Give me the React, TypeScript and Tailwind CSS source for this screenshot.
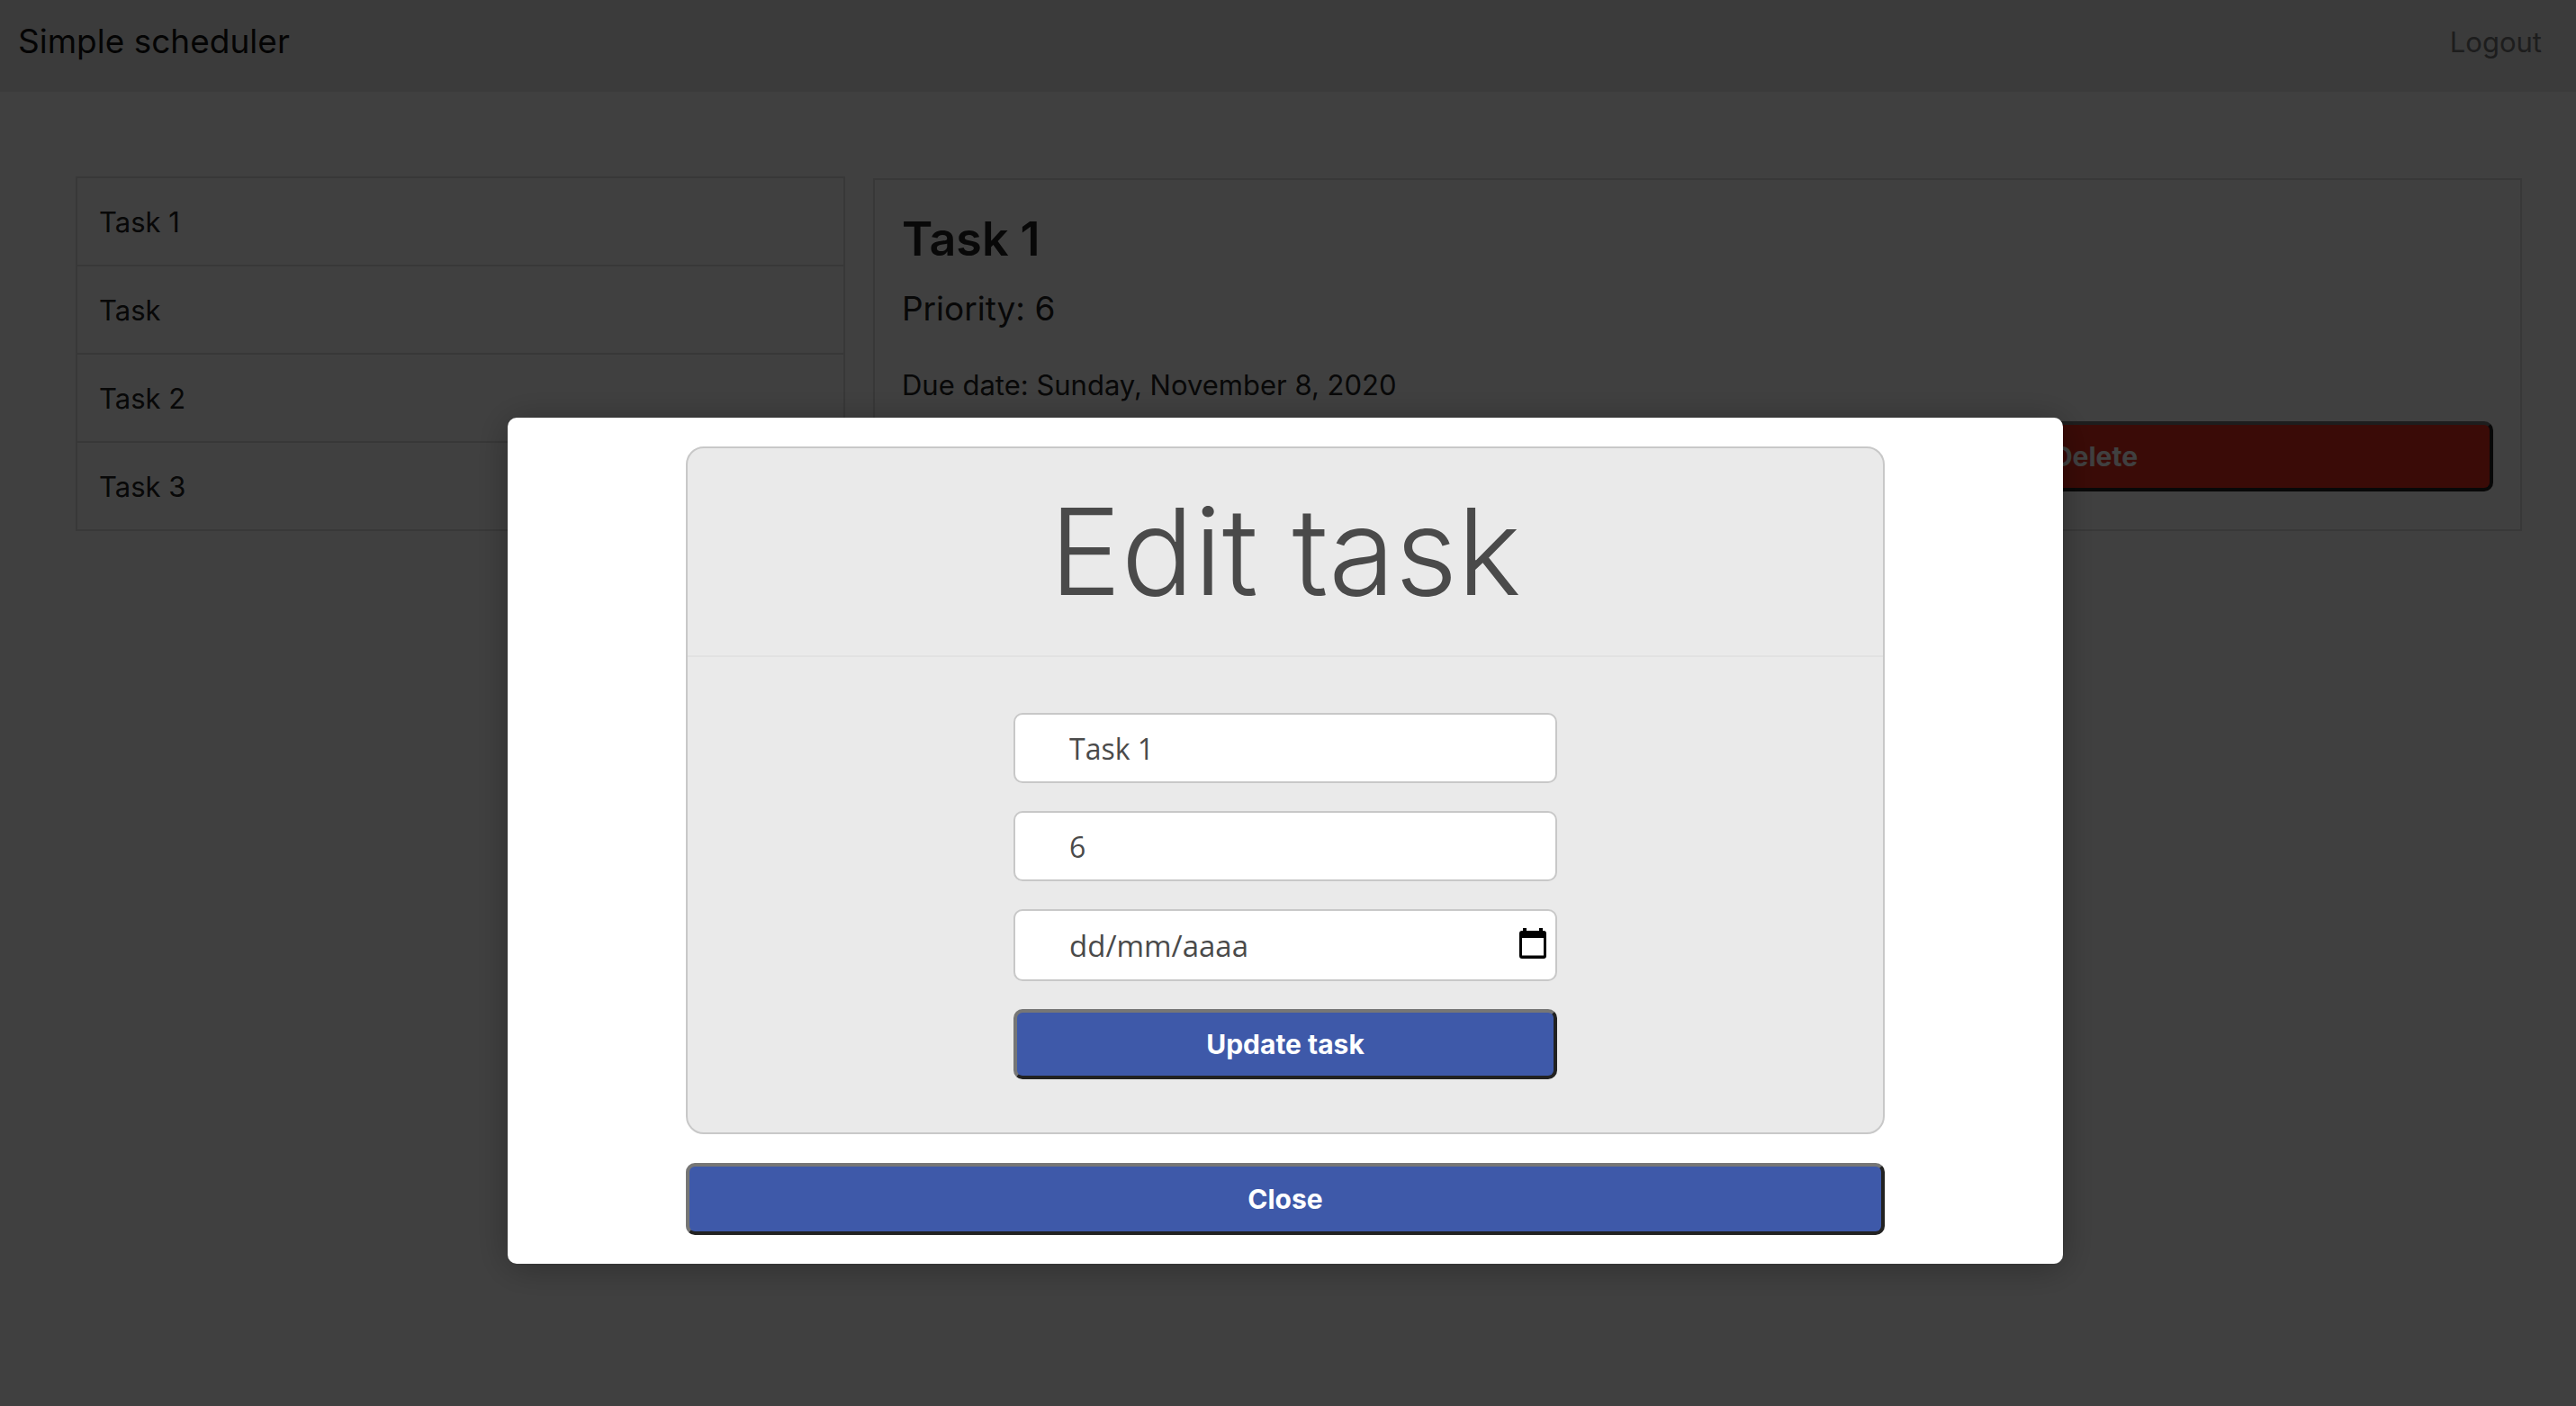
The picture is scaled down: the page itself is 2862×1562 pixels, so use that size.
import { useState } from "react";

const tasks = ["Task 1", "Task", "Task 2", "Task 3"];

const bevel =
  "rounded-[10px] border-4 border-t-[#767676] border-l-[#767676] border-r-[#222222] border-b-[#222222] text-[30px] leading-9 font-bold text-white";

const field =
  "w-full rounded-[10px] border-2 border-[#c8c8c8] bg-white pl-[60px] font-['Open_Sans',sans-serif] leading-[44px] text-[#4a4a4a] placeholder:text-[#4a4a4a] placeholder:opacity-100 outline-none";

function CalendarIcon() {
  return (
    <svg viewBox="0 0 30 34" className="h-[34px] w-[30px]" aria-hidden="true">
      <path
        fill="#000"
        fillRule="evenodd"
        d="M4 0h4v3h14V0h4v3h1a3 3 0 0 1 3 3v25a3 3 0 0 1-3 3H3a3 3 0 0 1-3-3V6a3 3 0 0 1 3-3h1zM3 11v19.500h24V11z"
      />
    </svg>
  );
}

function Header() {
  return (
    <header className="flex h-[102px] items-start justify-between bg-[#ececec] pt-5 pr-[38px] pl-5">
      <h1 className="text-[37px] leading-[52px] text-[#111111]">Simple scheduler</h1>
      <a href="#logout" className="text-[31px] leading-[54px] text-[#757575]">
        Logout
      </a>
    </header>
  );
}

function TaskList() {
  return (
    <ul className="border-2 border-[#dfdfdf]">
      {tasks.map((task) => (
        <li key={task} className="flex h-[98px] items-center border-b-2 border-[#dfdfdf] px-6 pt-0.5 text-[31px] text-[#222222] last:h-24 last:border-b-0">
          {task}
        </li>
      ))}
    </ul>
  );
}

function TaskDetail() {
  return (
    <section className="mt-0.5 border-2 border-[#dfdfdf] px-[30px] pt-8 pb-[42px] text-[#222222]">
      <h2 className="text-[52px] leading-[68px] font-semibold">Task 1</h2>
      <p className="mt-2 text-[37px] leading-[70px]">Priority: 6</p>
      <p className="mt-3 text-[31px] leading-[76px]">Due date: Sunday, November 8, 2020</p>
      <div className="flex pt-0.5">
        <button type="button" className={`h-[78px] flex-1 bg-[#3e59a9] ${bevel}`}>
          Edit
        </button>
        <button type="button" className={`h-[78px] flex-1 bg-[#e52c1c] ${bevel}`}>
          Delete
        </button>
      </div>
    </section>
  );
}

function EditDialog() {
  const [name, setName] = useState("Task 1");
  const [priority, setPriority] = useState("6");
  const [date, setDate] = useState("");

  return (
    <div className="fixed inset-0 flex items-start justify-center bg-black/75 pt-[464px] pr-1.5">
      <div
        role="dialog"
        aria-modal="true"
        aria-labelledby="edit-title"
        className="flex w-[60.5%] flex-col items-center gap-8 rounded-[10px] bg-white px-[198px] py-8 shadow-[0_4px_40px_rgba(0,0,0,0.3)]"
      >
        <form
          className="w-full rounded-[20px] border-2 border-[#c8c8c8] bg-[#eaeaea]"
          onSubmit={(e) => e.preventDefault()}
        >
          <h2
            id="edit-title"
            className="border-b-2 border-[#e2e2e2] pt-[34px] pb-9 text-center text-[134px] leading-[160px] font-light text-[#4a4a4a]"
          >
            Edit task
          </h2>
          <div className="mx-auto flex w-[604px] max-w-full flex-col gap-[31px] pt-[62px] pb-[59px]">
            <input
              aria-label="Task name"
              className={`h-[78px] text-[32px] ${field}`}
              value={name}
              onChange={(e) => setName(e.target.value)}
            />
            <input
              aria-label="Priority"
              className={`h-[78px] text-[32px] ${field}`}
              value={priority}
              onChange={(e) => setPriority(e.target.value)}
            />
            <div className="relative">
              <input
                aria-label="Due date"
                placeholder="dd/mm/aaaa"
                className={`block h-20 text-[33px] ${field}`}
                value={date}
                onChange={(e) => setDate(e.target.value)}
              />
              <button type="button" aria-label="Choose a date" className="absolute top-[21px] right-3">
                <CalendarIcon />
              </button>
            </div>
            <button type="submit" className={`h-[78px] bg-[#3e59a9] ${bevel}`}>
              Update task
            </button>
          </div>
        </form>
        <button type="button" className={`h-20 w-full bg-[#3e59a9] ${bevel}`}>
          Close
        </button>
      </div>
    </div>
  );
}

export default function App() {
  return (
    <div className="min-h-screen bg-white font-['Inter',sans-serif]">
      <Header />
      <main className="grid grid-cols-[7fr_15fr] items-start gap-[31px] pt-[94px] pr-[60px] pl-[84px]">
        <TaskList />
        <TaskDetail />
      </main>
      <EditDialog />
    </div>
  );
}
